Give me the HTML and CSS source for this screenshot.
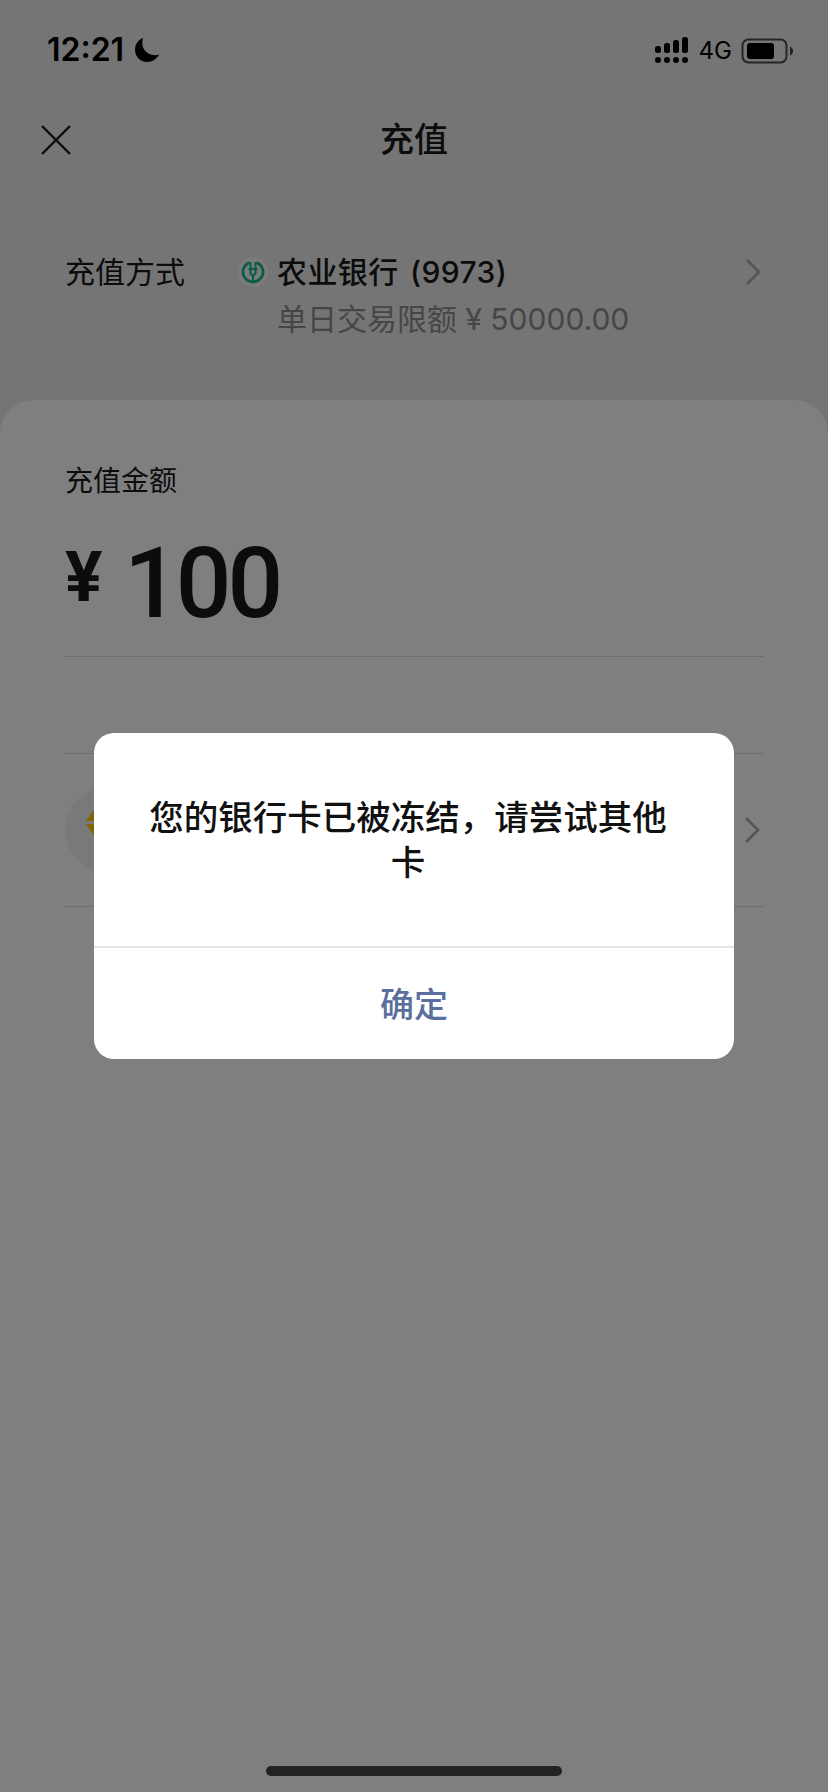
FILE: index.html
```html
<!DOCTYPE html>
<html>
<head lang="en">
    <meta charset="UTF-8">
    <title>充值</title>
    <link rel="stylesheet" href="styles.css">
</head>
<body>
<div id="page">
    <div id="status">
        <div class="time">12:21
            <svg class="moon" width="26" height="26" viewBox="0 0 26 26"><path d="M9 1C3.800 3 1 7.500 1 12.800 1 19.800 6.400 25 13.200 25 18.400 25 22.700 22.200 25 17.600 23.800 18.100 22.400 18.300 21 18.300 14.200 18.300 8.300 13 8.300 6.300 8.300 4.500 8.500 2.700 9 1Z" fill="#000"/></svg>
        </div>
        <div class="status-right">
            <svg class="signal" width="34" height="27" viewBox="0 0 34 27">
                <rect x="0" y="9" width="6" height="7" rx="2.500"/><rect x="9" y="6" width="6" height="10" rx="2.500"/><rect x="18" y="3" width="6" height="13" rx="2.500"/><rect x="27" y="0" width="6" height="16" rx="2.500"/>
                <circle cx="3" cy="23" r="3"/><circle cx="12" cy="23" r="3"/><circle cx="21" cy="23" r="3"/><circle cx="30" cy="23" r="3"/>
            </svg>
            <span class="net">4G</span>
            <svg class="battery" width="53" height="26" viewBox="0 0 53 26">
                <rect x="1.500" y="1.500" width="44" height="23" rx="6" fill="none" stroke="#4a4a4a" stroke-width="2"/>
                <rect x="6" y="5" width="27" height="16" rx="3" fill="#000"/>
                <path d="M49 8.500C51 9.500 52 11 52 13 52 15 51 16.500 49 17.500Z" fill="#4a4a4a"/>
            </svg>
        </div>
    </div>
    <div id="nav">
        <svg class="close" width="30" height="30" viewBox="0 0 30 30"><path d="M1 1L29 29M29 1L1 29" stroke="#181818" stroke-width="2.400" fill="none"/></svg>
        <h1>充值</h1>
    </div>
    <div id="method">
        <div class="method-label">充值方式</div>
        <svg class="bank-logo" width="30" height="30" viewBox="0 0 30 30">
            <circle cx="15" cy="15" r="15" fill="#f7f7f7"/>
            <path d="M11.500 5.600A10 10 0 1 0 18.500 5.600" fill="none" stroke="#14b892" stroke-width="2.800"/>
            <path d="M12.500 5V16.500L15 19V25M17.500 5V16.500L15 19M10.500 12H19.500" fill="none" stroke="#14b892" stroke-width="2"/>
        </svg>
        <div class="method-info">
            <div class="bank-name">农业银行 (9973)</div>
            <div class="bank-limit">单日交易限额 ¥ 50000.00</div>
        </div>
        <svg class="chevron" width="16" height="28" viewBox="0 0 16 28"><path d="M2 2L14 14 2 26" fill="none" stroke="#a8a8a8" stroke-width="2.600"/></svg>
    </div>
    <div id="sheet">
        <div class="sheet-label">充值金额</div>
        <div class="amount"><span class="yen">¥</span><span class="num">100</span></div>
        <div class="line"></div>
        <div class="blank"></div>
        <div class="line"></div>
        <div class="coupon">
            <div class="coin">
                <svg width="44" height="44" viewBox="0 0 44 44"><path d="M0 19L14 0H30L44 19ZM0 22L14 41H30L44 22Z" fill="#ffc800"/></svg>
            </div>
            <svg class="chevron" width="16" height="28" viewBox="0 0 16 28"><path d="M2 2L14 14 2 26" fill="none" stroke="#a8a8a8" stroke-width="2.600"/></svg>
        </div>
        <div class="line"></div>
        <div class="home-bar"></div>
    </div>
</div>
<div id="mask">
    <div id="dialog">
        <div class="dialog-text">您的银行卡已被冻结，请尝试其他卡</div>
        <div class="dialog-btn">确定</div>
    </div>
</div>
</body>
</html>
```

FILE: styles.css
```css
*{
    padding: 0;
    margin: 0;
    box-sizing: border-box;
}
html,body{
    width: 828px;
    height: 1792px;
    overflow: hidden;
}
body{
    position: relative;
    font-family: "Inter", "Noto Sans CJK SC", sans-serif;
    color: #181818;
}
#page{
    width: 828px;
    height: 1792px;
    background-color: #eaeaea;
    display: flex;
    flex-direction: column;
}
#status{
    height: 100px;
    padding: 33px 34px 0 47px;
    display: flex;
    justify-content: space-between;
    align-items: flex-start;
}
.time{
    display: flex;
    align-items: center;
    gap: 10px;
    font-size: 32px;
    line-height: 34px;
    font-weight: 600;
    color: #000;
}
.status-right{
    display: flex;
    align-items: center;
    gap: 10px;
    padding-top: 4px;
}
.signal{
    fill: #000;
}
.net{
    margin-right: -1px;
    font-size: 24px;
    line-height: 27px;
    color: #000;
}
#nav{
    height: 80px;
    padding-left: 41px;
    display: flex;
    align-items: center;
    position: relative;
}
#nav h1{
    position: absolute;
    left: 0;
    right: 0;
    text-align: center;
    font-size: 34px;
    font-weight: 500;
    line-height: 80px;
}
#method{
    height: 220px;
    padding: 72px 67px 0 65px;
    display: flex;
    align-items: flex-start;
}
.method-label{
    width: 173px;
    font-size: 30px;
    line-height: 40px;
}
.bank-logo{
    margin: 5px 9px 0 0;
}
.method-info{
    flex: 1;
}
.bank-name{
    font-size: 30px;
    line-height: 40px;
    font-weight: 500;
    word-spacing: 3px;
    letter-spacing: 0.4px;
}
.bank-limit{
    margin-top: 7px;
    font-size: 30px;
    line-height: 40px;
    color: #8c8c8c;
}
.chevron{
    flex-shrink: 0;
    margin-top: 6px;
}
#sheet{
    flex: 1;
    background-color: #ffffff;
    border-radius: 34px 34px 0 0;
    padding: 0 64px;
    display: flex;
    flex-direction: column;
}
.sheet-label{
    margin-top: 61px;
    padding-left: 1px;
    font-size: 28px;
    line-height: 40px;
}
.amount{
    height: 155px;
    padding: 0 0 3px 1px;
    display: flex;
    align-items: center;
    font-family: "Roboto", sans-serif;
    font-weight: 500;
    color: #181818;
}
.yen{
    font-size: 70px;
    font-weight: 700;
    width: 59px;
}
.num{
    padding-top: 14px;
    font-size: 98px;
    line-height: 114px;
    letter-spacing: -4px;
}
.line{
    height: 1px;
    background-color: #dcdcdc;
}
.blank{
    height: 96px;
}
.coupon{
    height: 152px;
    display: flex;
    align-items: center;
    justify-content: space-between;
    padding: 0 4px 0 1px;
}
.coupon .chevron{
    margin-top: 0;
}
.coin{
    width: 86px;
    height: 86px;
    border-radius: 50%;
    background-color: #f2f2f2;
    display: flex;
    align-items: center;
    justify-content: center;
}
.coin svg{
    margin-bottom: 12px;
}
.home-bar{
    width: 296px;
    height: 10px;
    border-radius: 5px;
    background-color: #444444;
    margin: auto 0 16px 202px;
}
#mask{
    position: absolute;
    left: 0;
    top: 0;
    width: 828px;
    height: 1792px;
    background-color: rgba(0,0,0,0.5);
    display: flex;
    align-items: center;
    justify-content: center;
}
#dialog{
    width: 640px;
    height: 326px;
    background-color: #ffffff;
    border-radius: 20px;
    display: flex;
    flex-direction: column;
}
.dialog-text{
    height: 215px;
    padding: 62px 60px 0 48px;
    border-bottom: 2px solid #e4e4e4;
    text-align: center;
    font-size: 34.500px;
    line-height: 45px;
    font-weight: 500;
    color: #111111;
}
.dialog-btn{
    flex: 1;
    display: flex;
    align-items: center;
    justify-content: center;
    padding-bottom: 3px;
    font-size: 34px;
    font-weight: 500;
    color: #5a6f9e;
}
```
